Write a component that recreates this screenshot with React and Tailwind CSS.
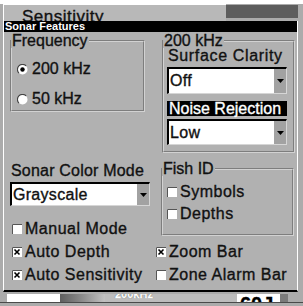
function Check({ on, label, className = '' }) {
  return (
    <div className={`flex items-center gap-[3px] h-[16px] text-[16px] leading-[16px] tracking-[0.5px] ${className}`}>
      <svg width="10" height="10" viewBox="0 0 10 10" className="shrink-0">
        <rect x="0" y="0" width="10" height="10" fill="#fff" />
        <path d="M0.5 10V0.5H10" stroke="#555" fill="none" />
        {on && <path d="M2.5 2.5l5 5M7.5 2.5l-5 5" stroke="#000" strokeWidth="1.6" />}
      </svg>
      <span>{label}</span>
    </div>
  )
}

function Radio({ on, label }) {
  return (
    <div className="flex items-center gap-[4px] h-[16px] text-[16px] leading-[16px]">
      <svg width="11" height="11" viewBox="0 0 11 11" className="shrink-0">
        <circle cx="5.5" cy="5.5" r="5" fill="#fff" />
        <path d="M1.9 9.1A5 5 0 0 1 9.1 1.9" stroke="#444" fill="none" strokeWidth="1.2" />
        {on && <circle cx="5.5" cy="5.5" r="2.2" fill="#000" />}
      </svg>
      <span>{label}</span>
    </div>
  )
}

function Select({ value, className = '' }) {
  return (
    <div className={`flex bg-white border-t-2 border-l-2 border-b border-r border-t-black border-l-black border-b-[#d6d6d6] border-r-[#d6d6d6] ${className}`}>
      <span className="flex-1 flex items-center pl-[1px] text-[16px] leading-[16px] tracking-[0.3px]">{value}</span>
      <span className="w-[12px] bg-[#a2a2a2] flex items-center justify-center">
        <svg width="7" height="4" viewBox="0 0 7 4">
          <polygon points="0,0 7,0 3.5,4" fill="#000" />
        </svg>
      </span>
    </div>
  )
}

function Group({ title, className = '', children }) {
  return (
    <div className={`border-2 [border-style:groove] border-[#d2d2d2] ${className}`}>
      <div className="-mt-[8px] -ml-[1px] w-fit px-[1px] bg-[#b1b1b1] text-[16px] leading-[14px]">{title}</div>
      {children}
    </div>
  )
}

export default function App() {
  return (
    <div className="w-[303px] h-[306px] overflow-hidden bg-[#ababab] text-[#111] [-webkit-text-stroke:0.35px] font-['Liberation_Sans',Arial,sans-serif]">
      <div className="h-[4px] bg-white" />

      {/* screen behind the menu */}
      <div className="ml-[3px] mr-[5px] h-[17px] flex border-l border-white">
        <div className="flex-1 border-t border-white bg-[#b8b8b8] overflow-hidden pl-[18px] pt-[4px] text-[17px] leading-[16px] tracking-[0.5px]">
          Sensitivity
        </div>
        <div className="w-[72px] mt-[1px] h-[13px] bg-[#5d5d5d]" />
      </div>

      {/* Sonar Features menu */}
      <div className="ml-[3px] w-[295px] border-l border-r border-white border-b-2 border-b-black bg-[#b1b1b1]">
        <div className="h-[11px] bg-black text-white text-[11px] font-bold leading-[11px] pl-[1px] [-webkit-text-stroke:0px]">Sonar Features</div>

        <div className="pl-[6px] pb-[7px]">
          <div className="flex items-start">
            <Group title="Frequency" className="w-[135px] mt-[8px]">
              <div className="pl-[5px] pt-[13px] pb-[3px] flex flex-col gap-[14px]">
                <Radio on label="200 kHz" />
                <Radio label="50 kHz" />
              </div>
            </Group>
            <Group title="200 kHz" className="w-[133px] ml-[17px] mt-[8px]">
              <div className="pl-[3px] pb-[6px]">
                <div className="mt-[1px] pl-[1px] text-[16px] leading-[14px] tracking-[0.65px]">Surface Clarity</div>
                <Select value="Off" className="mt-[4px] w-[120px] h-[27px]" />
                <div className="mt-[7px] w-[120px] h-[15px] bg-black text-white pl-[2px] text-[16px] leading-[15px]">Noise Rejection</div>
                <Select value="Low" className="mt-[3px] w-[120px] h-[26px]" />
              </div>
            </Group>
          </div>

          <div className="flex items-start">
            <div className="w-[140px] mt-[11px]">
              <div className="pl-[1px] text-[16px] leading-[14px] tracking-[0.2px]">Sonar Color Mode</div>
              <Select value="Grayscale" className="mt-[4px] w-[140px] h-[24px]" />
              <Check label="Manual Mode" className="mt-[15px] ml-[2px]" />
            </div>
            <Group title="Fish ID" className="w-[133px] ml-[11px] mt-[15px]">
              <div className="pl-[4px] pt-[8px] pb-[12px] flex flex-col gap-[6px]">
                <Check label="Symbols" />
                <Check label="Depths" />
              </div>
            </Group>
          </div>

          <div className="grid grid-cols-[146px_1fr] gap-y-[7px] mt-[7px]">
            <Check on label="Auto Depth" className="ml-[2px]" />
            <Check on label="Zoom Bar" />
            <Check on label="Auto Sensitivity" className="ml-[2px]" />
            <Check label="Zone Alarm Bar" />
          </div>
        </div>
      </div>

      {/* chart strip below the menu */}
      <div className="h-[14px] flex flex-col">
        <div className="h-[2px]" />
        <div className="h-[8px] flex overflow-hidden pl-[7px]">
          <div className="w-[53px] bg-white" />
          <div className="w-[45px] bg-linear-to-r from-[#5e5e5e] via-[#8c8c8c] to-[#c2c2c2]" />
          <div className="w-[132px] bg-[#bdbdbd] overflow-hidden">
            <div className="-mt-[5px] ml-[10px] text-[11px] leading-[11px] font-bold text-white [text-shadow:0_0_1px_#000]">200kHz</div>
          </div>
          <div className="w-[43px] bg-white overflow-hidden">
            <div className="ml-[3px] text-[20px] leading-[20px] font-bold text-black">60J</div>
          </div>
          <div className="w-[8px] bg-[#7a7a7a]" />
        </div>
        <div className="h-[1px] bg-[#4a4a4a]" />
      </div>
    </div>
  )
}
